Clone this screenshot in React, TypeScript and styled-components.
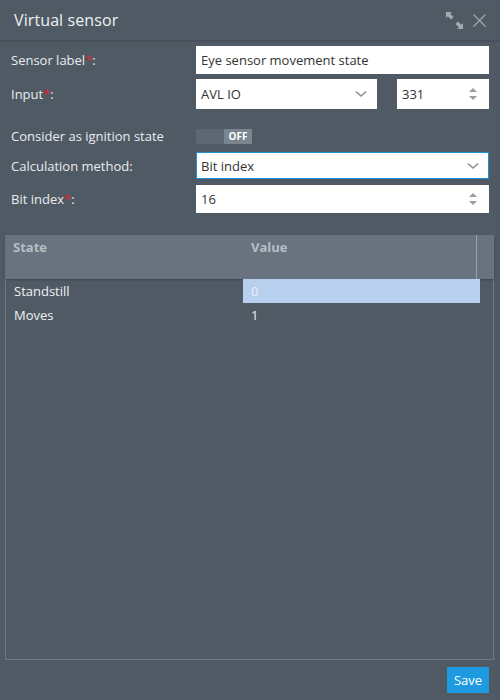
import React from "react";
import styled, { createGlobalStyle } from "styled-components";

const GlobalStyle = createGlobalStyle`
  html, body {
    margin: 0;
    padding: 0;
    background: #505a65;
  }
  * {
    box-sizing: border-box;
  }
`;

const Window = styled.div`
  width: 500px;
  height: 700px;
  background: #505a65;
  font-family: "Open Sans", "Liberation Sans", sans-serif;
  color: #e9ecef;
  display: flex;
  flex-direction: column;
`;

const TitleBar = styled.div`
  height: 41px;
  flex: none;
  display: flex;
  align-items: center;
  justify-content: space-between;
  padding: 0 14px 0 14px;
  border-bottom: 1px solid #464e58;
  box-shadow: 0 1px 1px rgba(0, 0, 0, 0.08);
`;

const Title = styled.h1`
  margin: 0;
  font-size: 16px;
  font-weight: 400;
  color: #eef1f3;
  letter-spacing: 0.1px;
`;

const TitleTools = styled.div`
  display: flex;
  align-items: center;
  gap: 10px;
  margin-top: 1px;
`;

const Form = styled.div`
  display: flex;
  flex-direction: column;
  padding: 5px 11px 0 11px;
`;

const Row = styled.div<{ $top?: number; $h: number }>`
  display: grid;
  grid-template-columns: 185px 1fr;
  align-items: center;
  height: ${(p) => p.$h}px;
  margin-top: ${(p) => p.$top ?? 0}px;
`;

const Label = styled.label`
  font-size: 13px;
  color: #e9ecef;
  white-space: nowrap;
`;

const Req = styled.span`
  color: #e0262b;
`;

const Controls = styled.div`
  display: flex;
  gap: 20px;
  height: 100%;
`;

const Field = styled.div<{ $focus?: boolean; $w?: number }>`
  position: relative;
  height: 100%;
  flex: ${(p) => (p.$w ? `0 0 ${p.$w}px` : "1 1 auto")};
  background: #fff;
  border: 1px solid ${(p) => (p.$focus ? "#1c8fd6" : "#fff")};
  display: flex;
  align-items: center;
  padding: 0 0 0 4px;
  font-size: 13px;
  color: #333;
`;

const FieldText = styled.span`
  flex: 1;
  white-space: nowrap;
`;

const Adorn = styled.span`
  display: flex;
  align-items: center;
  justify-content: center;
  width: 30px;
  height: 100%;
  flex: none;
`;

const Toggle = styled.div`
  display: flex;
  width: 56px;
  height: 15px;
`;

const ToggleTrack = styled.div`
  flex: 1;
  background: #5e6874;
`;

const ToggleKnob = styled.div`
  width: 28px;
  background: #7b8590;
  color: #fff;
  font-size: 10px;
  font-weight: 700;
  display: flex;
  align-items: center;
  justify-content: center;
`;

const Grid = styled.div`
  margin: 22px 6px 0 5px;
  height: 425px;
  display: flex;
  flex-direction: column;
  border: 1px solid #6f7984;
  border-top: none;
`;

const GridHead = styled.div`
  height: 44px;
  flex: none;
  margin: 0 -1px;
  background: #68737f;
  display: grid;
  grid-template-columns: 238px 234px 1fr;
  box-shadow: 0 1px 2px rgba(0, 0, 0, 0.25);
`;

const HeadCell = styled.div<{ $divider?: boolean }>`
  padding: 3px 0 0 8px;
  font-size: 13px;
  font-weight: 700;
  color: #b6bdc5;
  border-right: ${(p) => (p.$divider ? "1px solid #9aa3ad" : "none")};
`;

const GridRow = styled.div`
  display: grid;
  grid-template-columns: 237px 237px;
  height: 24px;
`;

const Cell = styled.div<{ $selected?: boolean }>`
  display: flex;
  align-items: center;
  padding-left: 8px;
  font-size: 13px;
  color: ${(p) => (p.$selected ? "#e8eef6" : "#eef1f3")};
  background: ${(p) => (p.$selected ? "#b8d0ee" : "transparent")};
`;

const Footer = styled.div`
  display: flex;
  justify-content: flex-end;
  padding: 7px 11px 0 0;
`;

const SaveButton = styled.button`
  width: 42px;
  height: 26px;
  border: none;
  background: #1e9be0;
  color: #fff;
  font-family: inherit;
  font-size: 13px;
  padding: 0;
`;

const Chevron = () => (
  <svg width="12" height="8" viewBox="0 0 12 8">
    <path d="M1 1.5 L6 6 L11 1.5" fill="none" stroke="#8a8f95" strokeWidth="1.6" />
  </svg>
);

const Spinner = () => (
  <svg width="10" height="16" viewBox="0 0 10 16">
    <path d="M5 2 L9 6 L1 6 Z" fill="#9a9ea3" />
    <path d="M1 10 L9 10 L5 14 Z" fill="#9a9ea3" />
  </svg>
);

const ExpandIcon = () => (
  <svg width="17" height="17" viewBox="0 0 17 17">
    <path d="M0 0 H6 L4.2 1.8 L7.5 5.1 L5.1 7.5 L1.8 4.2 L0 6 Z" fill="#a3abb4" />
    <path d="M17 17 H11 L12.8 15.2 L9.5 11.9 L11.9 9.5 L15.2 12.8 L17 11 Z" fill="#a3abb4" />
  </svg>
);

const CloseIcon = () => (
  <svg width="13" height="13" viewBox="0 0 13 13">
    <path d="M0.5 0.5 L12.5 12.5 M12.5 0.5 L0.5 12.5" stroke="#a3abb4" strokeWidth="1.1" />
  </svg>
);

const App: React.FC = () => {
  return (
    <>
      <GlobalStyle />
      <Window>
        <TitleBar>
          <Title>Virtual sensor</Title>
          <TitleTools>
            <ExpandIcon />
            <CloseIcon />
          </TitleTools>
        </TitleBar>

        <Form>
          <Row $h={28}>
            <Label>
              Sensor label<Req>*</Req>:
            </Label>
            <Controls>
              <Field>
                <FieldText>Eye sensor movement state</FieldText>
              </Field>
            </Controls>
          </Row>

          <Row $h={30} $top={5}>
            <Label>
              Input<Req>*</Req>:
            </Label>
            <Controls>
              <Field $w={181}>
                <FieldText>AVL IO</FieldText>
                <Adorn>
                  <Chevron />
                </Adorn>
              </Field>
              <Field>
                <FieldText>331</FieldText>
                <Adorn>
                  <Spinner />
                </Adorn>
              </Field>
            </Controls>
          </Row>

          <Row $h={15} $top={18}>
            <Label>Consider as ignition state</Label>
            <Toggle>
              <ToggleTrack />
              <ToggleKnob>OFF</ToggleKnob>
            </Toggle>
          </Row>

          <Row $h={27} $top={10}>
            <Label>Calculation method:</Label>
            <Controls>
              <Field $focus>
                <FieldText>Bit index</FieldText>
                <Adorn>
                  <Chevron />
                </Adorn>
              </Field>
            </Controls>
          </Row>

          <Row $h={28} $top={6}>
            <Label>
              Bit index<Req>*</Req>:
            </Label>
            <Controls>
              <Field>
                <FieldText>16</FieldText>
                <Adorn>
                  <Spinner />
                </Adorn>
              </Field>
            </Controls>
          </Row>
        </Form>

        <Grid>
          <GridHead>
            <HeadCell>State</HeadCell>
            <HeadCell $divider>Value</HeadCell>
            <HeadCell />
          </GridHead>
          <GridRow>
            <Cell>Standstill</Cell>
            <Cell $selected>0</Cell>
          </GridRow>
          <GridRow>
            <Cell>Moves</Cell>
            <Cell>1</Cell>
          </GridRow>
        </Grid>

        <Footer>
          <SaveButton>Save</SaveButton>
        </Footer>
      </Window>
    </>
  );
};

export default App;
